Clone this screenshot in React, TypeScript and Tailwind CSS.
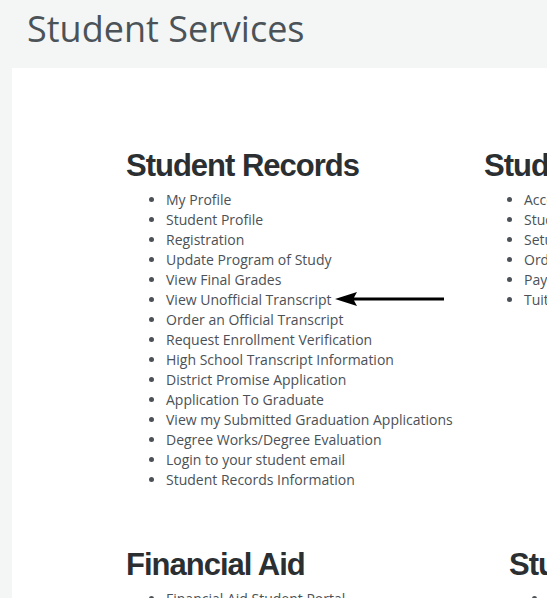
import React from 'react';

const records = [
  'My Profile',
  'Student Profile',
  'Registration',
  'Update Program of Study',
  'View Final Grades',
  'View Unofficial Transcript',
  'Order an Official Transcript',
  'Request Enrollment Verification',
  'High School Transcript Information',
  'District Promise Application',
  'Application To Graduate',
  'View my Submitted Graduation Applications',
  'Degree Works/Degree Evaluation',
  'Login to your student email',
  'Student Records Information',
];

const accounts = [
  'Account Summary',
  'Student Payment Portal',
  'Setup Direct Deposit',
  'Order Parking Permit',
  'Pay Tuition and Fees',
  'Tuition and Fee Information',
];

const aid = ['Financial Aid Student Portal', 'Financial Aid Forms'];

// arrow pointing at the transcript link
const Arrow = () => (
  <svg
    className="absolute left-[334px] top-[291px]"
    width="112"
    height="16"
    viewBox="0 0 112 16"
  >
    <path d="M1 8 L23 1 L20 6.5 L110 6.5 L110 9.5 L20 9.5 L23 15 Z" fill="#000" />
  </svg>
);

const LinkList = ({ items }: { items: string[] }) => (
  <ul className="mt-[6px] list-disc pl-[40px] font-['Open_Sans',sans-serif] text-[14px] leading-[20px] text-[#4b5156]">
    {items.map((item) => (
      <li key={item} className="whitespace-nowrap">
        {item}
      </li>
    ))}
  </ul>
);

const Section = ({ title, items }: { title: string; items: string[] }) => (
  <div>
    <h2 className="font-['Liberation_Sans',Arial,sans-serif] text-[31px] font-bold leading-[36px] tracking-[-1px] text-[#2b2f32]">
      {title}
    </h2>
    <LinkList items={items} />
  </div>
);

export default function App() {
  return (
    <div className="relative h-[598px] w-[547px] overflow-hidden bg-[#f4f6f6]">
      <h1 className="px-[27px] pt-[4px] font-['Open_Sans',sans-serif] text-[36px] leading-[50px] text-[#4b5358]">
        Student Services
      </h1>
      <div className="ml-[12px] mt-[14px] h-[600px] bg-white pl-[114px] pt-[80px]">
        <div className="flex w-[700px]">
          <div className="w-[358px] shrink-0">
            <Section title="Student Records" items={records} />
          </div>
          <Section title="Student Accounts" items={accounts} />
        </div>
        <div className="mt-[57px] flex w-[700px]">
          <div className="w-[383px] shrink-0">
            <Section title="Financial Aid" items={aid} />
          </div>
          <Section title="Student Success" items={['Counseling']} />
        </div>
      </div>
      <Arrow />
    </div>
  );
}
